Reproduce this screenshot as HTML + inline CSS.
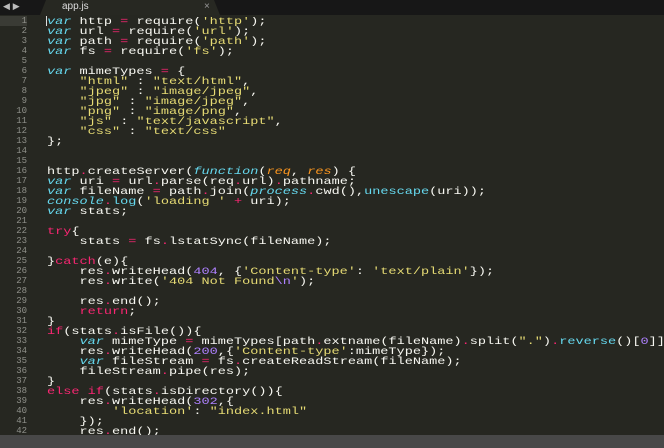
<!DOCTYPE html><html><head><style>
body{margin:0;width:664px;height:448px;overflow:hidden;background:#262721;font-family:"Liberation Mono",monospace;}
#tabs{position:absolute;left:0;top:0;width:664px;height:15px;background:#171717;}
#tab{position:absolute;left:40px;top:0;width:180px;height:15px;background:#272822;clip-path:polygon(6px 0,174px 0,180px 15px,0 15px);}
#tab span{position:absolute;left:22px;top:1px;font:10px "Liberation Sans",sans-serif;color:#ddd;}
#tab b{position:absolute;left:164px;top:1px;font:10px "Liberation Sans",sans-serif;color:#999;font-weight:normal}
#arr{position:absolute;left:3px;top:2px;color:#bbb;font-size:9px;font-family:"DejaVu Sans";}
#gut{position:absolute;left:0;top:16px;width:27px;color:#8f908a;font-size:9px;line-height:10px;text-align:right;}
#gut div:first-child{background:#3a3b35;}
#code{position:absolute;left:47px;top:17px;width:500px;color:#f8f8f2;font-size:10.5px;line-height:10px;white-space:pre;overflow:hidden;height:418px;transform:scaleX(1.29);transform-origin:0 0;}
#cur{position:absolute;left:46px;top:16px;width:1px;height:10px;background:#ddd}
.k{color:#66d9ef;font-style:italic}.o{color:#f92672}.s{color:#e6db74}.n{color:#ae81ff}.c{color:#66d9ef}.p{color:#fd971f;font-style:italic}
#status{position:absolute;left:0;top:435px;width:664px;height:13px;background:#484848;}
</style></head><body>
<div id="tabs"><div id="arr">◀ ▶</div><div id="tab"><span>app.js</span><b>×</b></div></div>
<div id="gut"><div>1 </div><div>2 </div><div>3 </div><div>4 </div><div>5 </div><div>6 </div><div>7 </div><div>8 </div><div>9 </div><div>10 </div><div>11 </div><div>12 </div><div>13 </div><div>14 </div><div>15 </div><div>16 </div><div>17 </div><div>18 </div><div>19 </div><div>20 </div><div>21 </div><div>22 </div><div>23 </div><div>24 </div><div>25 </div><div>26 </div><div>27 </div><div>28 </div><div>29 </div><div>30 </div><div>31 </div><div>32 </div><div>33 </div><div>34 </div><div>35 </div><div>36 </div><div>37 </div><div>38 </div><div>39 </div><div>40 </div><div>41 </div><div>42 </div><div>43 </div></div>
<div id="cur"></div>
<div id="code"><span class="k">var</span> http <span class="o">=</span> require(<span class="s">'http'</span>);
<span class="k">var</span> url <span class="o">=</span> require(<span class="s">'url'</span>);
<span class="k">var</span> path <span class="o">=</span> require(<span class="s">'path'</span>);
<span class="k">var</span> fs <span class="o">=</span> require(<span class="s">'fs'</span>);

<span class="k">var</span> mimeTypes <span class="o">=</span> {
    <span class="s">"html"</span> : <span class="s">"text/html"</span>,
    <span class="s">"jpeg"</span> : <span class="s">"image/jpeg"</span>,
    <span class="s">"jpg"</span> : <span class="s">"image/jpeg"</span>,
    <span class="s">"png"</span> : <span class="s">"image/png"</span>,
    <span class="s">"js"</span> : <span class="s">"text/javascript"</span>,
    <span class="s">"css"</span> : <span class="s">"text/css"</span>
};


http<span class="o">.</span>createServer(<span class="k">function</span>(<span class="p">req</span>, <span class="p">res</span>) {
<span class="k">var</span> uri <span class="o">=</span> url<span class="o">.</span>parse(req<span class="o">.</span>url)<span class="o">.</span>pathname;
<span class="k">var</span> fileName <span class="o">=</span> path<span class="o">.</span>join(<span class="k">process</span><span class="o">.</span>cwd(),<span class="c">unescape</span>(uri));
<span class="k">console</span><span class="o">.</span><span class="c">log</span>(<span class="s">'loading '</span> <span class="o">+</span> uri);
<span class="k">var</span> stats;

<span class="o">try</span>{
    stats <span class="o">=</span> fs<span class="o">.</span>lstatSync(fileName);

}<span class="o">catch</span>(e){
    res<span class="o">.</span>writeHead(<span class="n">404</span>, {<span class="s">'Content-type'</span>: <span class="s">'text/plain'</span>});
    res<span class="o">.</span>write(<span class="s">'404 Not Found<span class="n">\n</span>'</span>);

    res<span class="o">.</span>end();
    <span class="o">return</span>;
}
<span class="o">if</span>(stats<span class="o">.</span>isFile()){
    <span class="k">var</span> mimeType <span class="o">=</span> mimeTypes[path<span class="o">.</span>extname(fileName)<span class="o">.</span>split(<span class="s">"."</span>)<span class="o">.</span><span class="c">reverse</span>()[<span class="n">0</span>]];
    res<span class="o">.</span>writeHead(<span class="n">200</span>,{<span class="s">'Content-type'</span>:mimeType});
    <span class="k">var</span> fileStream <span class="o">=</span> fs<span class="o">.</span>createReadStream(fileName);
    fileStream<span class="o">.</span>pipe(res);
}
<span class="o">else</span> <span class="o">if</span>(stats<span class="o">.</span>isDirectory()){
    res<span class="o">.</span>writeHead(<span class="n">302</span>,{
        <span class="s">'location'</span>: <span class="s">"index.html"</span>
    });
    res<span class="o">.</span>end();
</div>
<div id="status"></div>
</body></html>
